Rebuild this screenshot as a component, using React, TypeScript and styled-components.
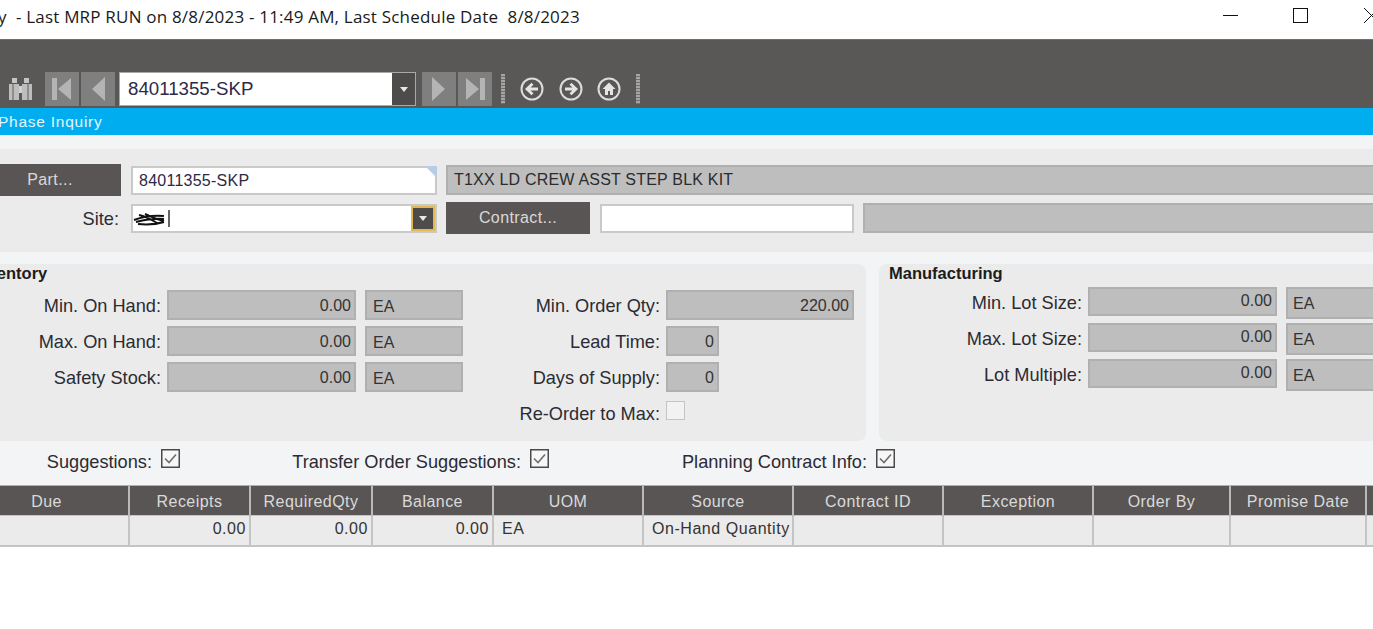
import { createGlobalStyle, styled } from "styled-components";

const FONT = `"Liberation Sans", Arial, sans-serif`;
const COLS = "165px 121px 122px 121px 150px 150px 150px 150px 137px 136px 7px";

const HEADERS = ["Due", "Receipts", "RequiredQty", "Balance", "UOM", "Source", "Contract ID", "Exception", "Order By", "Promise Date", ""];
const CELLS = ["", "0.00", "0.00", "0.00", "EA", "On-Hand Quantity", "", "", "", "", ""];

const GlobalStyle = createGlobalStyle`
  html, body {
    margin: 0;
    background: #fff;
    overflow: hidden;
  }
  body {
    font-family: ${FONT};
    font-size: 16px;
    color: #2b2b33;
  }
  * { box-sizing: border-box; }
`;

const App = () => {
  return (
    <Page>
      <GlobalStyle />
      <TitleBar>
        <TitleText>y&nbsp; - Last MRP RUN on 8/8/2023 - 11:49 AM, Last Schedule Date&nbsp; 8/8/2023</TitleText>
        <WindowButtons>
          <WinIcon viewBox="0 0 15 15">
            <path d="M0 7.5h15" stroke="#111" fill="none" />
          </WinIcon>
          <WinIcon viewBox="0 0 15 15">
            <rect x="0.5" y="0.5" width="14" height="14" stroke="#111" fill="none" />
          </WinIcon>
          <WinIcon viewBox="0 0 15 15">
            <path d="M1 0l14 14M1 15L15 1" stroke="#111" fill="none" />
          </WinIcon>
        </WindowButtons>
      </TitleBar>

      <Toolbar>
        <Binoculars viewBox="0 0 25 22">
          <path d="M4 0h5v5H4zM16 0h5v5h-5z" fill="#c4c4c4" />
          <path d="M1 6h10v16H1zM14 6h10v16H14z" fill="#bdbdbd" />
          <path d="M11 8h3v7h-3z" fill="#d0d0d0" />
          <path d="M4 6h2v16H4zM19 6h2v16h-2z" fill="#8e8e8e" />
        </Binoculars>
        <NavButton><NavIcon kind="first" /></NavButton>
        <NavButton><NavIcon kind="prev" /></NavButton>
        <ToolbarCombo>
          <ToolbarValue>84011355-SKP</ToolbarValue>
          <ComboArrow $w={23}><Caret /></ComboArrow>
        </ToolbarCombo>
        <NavButton><NavIcon kind="next" /></NavButton>
        <NavButton><NavIcon kind="last" /></NavButton>
        <Grip />
        <RoundIcon kind="back" />
        <RoundIcon kind="forward" />
        <RoundIcon kind="home" />
        <Grip />
      </Toolbar>

      <TabBar>Phase Inquiry</TabBar>

      <FormArea>
        <HeaderBlock>
          <PartRow>
            <PartButton>Part...</PartButton>
            <WhiteInput $w={306}>
              84011355-SKP
              <Corner />
            </WhiteInput>
            <GrayInput>T1XX LD CREW ASST STEP BLK KIT</GrayInput>
          </PartRow>
          <SiteRow>
            <Label $w={119}>Site:</Label>
            <SiteCombo>
              <Scribble viewBox="0 0 40 20">
                <path d="M1 12c8-3 18-5 30-4M3 14c8-2 18-4 28-3M6 7c6 1 10 3 18 8M12 6c5 2 12 6 19 7M5 16c9 1 16 1 26-2" stroke="#111" strokeWidth="2" fill="none" />
                <path d="M36 2v17" stroke="#111" strokeWidth="1.3" />
              </Scribble>
              <ComboArrow $w={24} $focused><Caret /></ComboArrow>
            </SiteCombo>
            <DarkButton $w={144}>Contract...</DarkButton>
            <WhiteInput $w={254}></WhiteInput>
            <GrayInput />
          </SiteRow>
        </HeaderBlock>

        <Panels>
          <InventoryPanel>
            <PanelTitle $indent={-27}>Inventory</PanelTitle>
            <Columns>
              <Column>
                <FieldRow>
                  <Label $w={161}>Min. On Hand:</Label>
                  <Field $w={189}>0.00</Field>
                  <Unit $w={98}>EA</Unit>
                </FieldRow>
                <FieldRow>
                  <Label $w={161}>Max. On Hand:</Label>
                  <Field $w={189}>0.00</Field>
                  <Unit $w={98}>EA</Unit>
                </FieldRow>
                <FieldRow>
                  <Label $w={161}>Safety Stock:</Label>
                  <Field $w={189}>0.00</Field>
                  <Unit $w={98}>EA</Unit>
                </FieldRow>
              </Column>
              <Column>
                <FieldRow>
                  <Label $w={197}>Min. Order Qty:</Label>
                  <Field $w={188}>220.00</Field>
                </FieldRow>
                <FieldRow>
                  <Label $w={197}>Lead Time:</Label>
                  <Field $w={53}>0</Field>
                </FieldRow>
                <FieldRow>
                  <Label $w={197}>Days of Supply:</Label>
                  <Field $w={53}>0</Field>
                </FieldRow>
                <FieldRow>
                  <Label $w={197}>Re-Order to Max:</Label>
                  <DisabledBox />
                </FieldRow>
              </Column>
            </Columns>
          </InventoryPanel>

          <ManufacturingPanel>
            <PanelTitle $indent={10}>Manufacturing</PanelTitle>
            <LotColumn>
              <FieldRow $top>
                <Label $w={203}>Min. Lot Size:</Label>
                <LotField $w={189}>0.00</LotField>
                <LotUnit>EA</LotUnit>
              </FieldRow>
              <FieldRow $top>
                <Label $w={203}>Max. Lot Size:</Label>
                <LotField $w={189}>0.00</LotField>
                <LotUnit>EA</LotUnit>
              </FieldRow>
              <FieldRow $top>
                <Label $w={203}>Lot Multiple:</Label>
                <LotField $w={189}>0.00</LotField>
                <LotUnit>EA</LotUnit>
              </FieldRow>
            </LotColumn>
          </ManufacturingPanel>
        </Panels>

        <ChecksRow>
          <CheckLabel $w={152}>Suggestions:</CheckLabel>
          <CheckBox />
          <CheckLabel $w={341}>Transfer Order Suggestions:</CheckLabel>
          <CheckBox />
          <CheckLabel $w={318}>Planning Contract Info:</CheckLabel>
          <CheckBox />
        </ChecksRow>

        <GridHeader>
          {HEADERS.map((h, i) => (
            <HeadCell key={i}>{h}</HeadCell>
          ))}
        </GridHeader>
        <GridRow>
          {CELLS.map((c, i) => (
            <BodyCell key={i} $right={i >= 1 && i <= 3}>
              {c}
            </BodyCell>
          ))}
        </GridRow>
      </FormArea>
    </Page>
  );
};

const NavIcon = ({ kind }: { kind: "first" | "prev" | "next" | "last" }) => (
  <svg width="34" height="34" viewBox="0 0 34 34">
    {kind === "first" && <path d="M7 6h5v22H7zM26 6v22L13 17z" fill="#b4b4b4" />}
    {kind === "prev" && <path d="M24 5v24L11 17z" fill="#b4b4b4" />}
    {kind === "next" && <path d="M10 5v24l13-12z" fill="#b4b4b4" />}
    {kind === "last" && <path d="M8 6v22l13-11zM22 6h5v22h-5z" fill="#b4b4b4" />}
  </svg>
);

const Caret = () => (
  <svg width="8" height="5" viewBox="0 0 8 5">
    <path d="M0 0h8L4 5z" fill="#e8e8e8" />
  </svg>
);

const RoundIcon = ({ kind }: { kind: "back" | "forward" | "home" }) => (
  <RoundWrap width="24" height="24" viewBox="0 0 24 24">
    <circle cx="12" cy="12" r="10.5" stroke="#dcdcdc" strokeWidth="2" fill="none" />
    {kind === "back" && <path d="M18 12H8M12.5 6.8 7 12l5.5 5.2" stroke="#e4e4e4" strokeWidth="2.8" fill="none" />}
    {kind === "forward" && <path d="M6 12h10M11.5 6.8 17 12l-5.5 5.2" stroke="#e4e4e4" strokeWidth="2.8" fill="none" />}
    {kind === "home" && <path d="M12 5.5 5.5 12H8v6h3v-4h2v4h3v-6h2.5z" fill="#e4e4e4" />}
  </RoundWrap>
);

const Page = styled.div`
  width: 1373px;
  height: 629px;
  overflow: hidden;
  background: #fff;
`;

const TitleBar = styled.div`
  height: 39px;
  display: flex;
  align-items: center;
  justify-content: space-between;
  background: #fff;
`;

const TitleText = styled.div`
  font-family: "Open Sans", sans-serif;
  font-size: 17px;
  letter-spacing: 0.2px;
  color: #1a1a1a;
  margin-left: -2px;
  margin-top: -6px;
  white-space: nowrap;
`;

const WindowButtons = styled.div`
  display: flex;
  align-items: center;
  gap: 55px;
  margin-top: -9px;
  margin-right: -5px;
`;

const WinIcon = styled.svg`
  width: 15px;
  height: 15px;
  display: block;
  flex: none;
`;

const Toolbar = styled.div`
  height: 69px;
  background: #595857;
  border-top: 1px solid #6e6e6e;
  display: flex;
  align-items: flex-end;
  padding: 0 0 2px 8px;
`;

const Binoculars = styled.svg`
  width: 25px;
  height: 22px;
  margin: 0 12px 6px 0;
  flex: none;
`;

const NavButton = styled.div`
  width: 34px;
  height: 34px;
  background: #7f7f7f;
  margin-right: 2px;
  flex: none;
`;

const ToolbarCombo = styled.div`
  width: 297px;
  height: 34px;
  margin: 0 6px 0 2px;
  border: 1px solid #a8a8a8;
  background: #fff;
  display: flex;
  align-items: stretch;
  flex: none;
`;

const ToolbarValue = styled.div`
  flex: 1;
  padding-left: 8px;
  font-size: 18.7px;
  line-height: 32px;
  color: #2e2a45;
`;

const ComboArrow = styled.div<{ $w: number; $focused?: boolean }>`
  width: ${(p) => p.$w}px;
  background: #4d4c4b;
  display: flex;
  align-items: center;
  justify-content: center;
  flex: none;
  border: ${(p) => (p.$focused ? "2px solid #e2b84f" : "none")};
`;

const Grip = styled.div`
  width: 4px;
  height: 30px;
  margin: 0 15px 2px 7px;
  background: repeating-linear-gradient(to bottom, #a5a5a5 0 2px, #6f6f6f 2px 3px);
  flex: none;

  & ~ & {
    margin-left: 0;
  }
`;

const RoundWrap = styled.svg`
  width: 24px;
  height: 24px;
  margin: 0 14.5px 5px 0;
  flex: none;
`;

const TabBar = styled.div`
  height: 27px;
  background: #00adef;
  color: #e4f4fb;
  font-size: 15.5px;
  line-height: 27px;
  text-indent: -2px;
  letter-spacing: 0.75px;
`;

const FormArea = styled.div`
  background: #f3f4f6;
  height: 412px;
  padding-top: 14px;
`;

const HeaderBlock = styled.div`
  background: #ebebeb;
  height: 103px;
  padding-top: 15px;
`;

const PartRow = styled.div`
  display: flex;
  align-items: center;
  gap: 10px;
  height: 32px;
  margin-bottom: 6px;
  & > :last-child {
    margin-left: -1px;
  }
`;

const SiteRow = styled(PartRow)`
  margin-bottom: 0;
  & > :nth-child(1) {
    margin-right: 2px;
  }
  & > :nth-child(2) {
    margin-right: -1px;
  }
  & > :last-child {
    margin-left: -1px;
  }
`;

const DarkButton = styled.div<{ $w: number }>`
  width: ${(p) => p.$w}px;
  height: 32px;
  background: #595554;
  color: #d9d9d9;
  letter-spacing: 0.4px;
  display: flex;
  align-items: center;
  justify-content: center;
  flex: none;
`;

/* the button runs off the left edge of the shot, so its label sits left of the visible centre */
const PartButton = styled(DarkButton).attrs({ $w: 142 })`
  margin-left: -21px;
`;

const WhiteInput = styled.div<{ $w: number }>`
  position: relative;
  width: ${(p) => p.$w}px;
  height: 29px;
  background: #fff;
  border: 2px solid #c9c9c9;
  padding-left: 6px;
  line-height: 25px;
  letter-spacing: 0.25px;
  color: #2e2a45;
  flex: none;
`;

const Corner = styled.span`
  position: absolute;
  top: -2px;
  right: -2px;
  border-top: 12px solid #b6cde4;
  border-left: 12px solid transparent;
`;

const GrayInput = styled.div`
  flex: 1;
  height: 30px;
  background: #bebebe;
  border: 2px solid #b0b0b0;
  border-right: none;
  padding-left: 6px;
  line-height: 26px;
  letter-spacing: 0.2px;
  color: #2b2b2b;
  white-space: nowrap;
`;

const SiteCombo = styled.div`
  width: 306px;
  height: 29px;
  background: #fff;
  border: 2px solid #c9c9c9;
  display: flex;
  justify-content: space-between;
  flex: none;
`;

const Scribble = styled.svg`
  width: 40px;
  height: 20px;
  margin-top: 2px;
`;

const Panels = styled.div`
  display: flex;
  margin-top: 12px;
  height: 177px;
`;

const InventoryPanel = styled.div`
  width: 866px;
  background: #ebebeb;
  border-radius: 0 8px 8px 0;
  flex: none;
`;

const ManufacturingPanel = styled.div`
  flex: 1;
  margin-left: 13px;
  background: #ebebeb;
  border-radius: 8px 0 0 8px;
`;

const PanelTitle = styled.div<{ $indent: number }>`
  font-weight: 700;
  font-size: 16.5px;
  line-height: 18px;
  color: #1c1c1c;
  margin-left: ${(p) => p.$indent}px;
`;

const Columns = styled.div`
  display: flex;
  align-items: flex-start;
  margin-top: 8px;
`;

const Column = styled.div`
  display: flex;
  flex-direction: column;
  gap: 6px;
`;

const LotColumn = styled(Column)`
  margin-top: 5px;
  gap: 4px;
`;

const FieldRow = styled.div<{ $top?: boolean }>`
  display: flex;
  align-items: ${(p) => (p.$top ? "flex-start" : "center")};
  gap: 6px;
  height: ${(p) => (p.$top ? "32px" : "30px")};
`;

const Label = styled.div<{ $w: number }>`
  width: ${(p) => p.$w}px;
  height: 30px;
  font-size: 18.2px;
  text-align: right;
  white-space: nowrap;
  flex: none;
  color: #2b2b33;
  line-height: 32px;
`;

const Field = styled.div<{ $w: number }>`
  width: ${(p) => p.$w}px;
  height: 30px;
  background: #bebebe;
  border: 2px solid #b0b0b0;
  text-align: right;
  padding-right: 3px;
  line-height: 27px;
  color: #333;
  flex: none;
`;

const Unit = styled.div<{ $w: number }>`
  width: ${(p) => p.$w}px;
  height: 30px;
  margin-left: 3px;
  background: #bebebe;
  border: 2px solid #b0b0b0;
  padding-left: 6px;
  line-height: 30px;
  color: #333;
  flex: none;
`;

const LotField = styled(Field)`
  height: 29px;
  line-height: 24px;
`;

const LotUnit = styled.div`
  width: 100px;
  height: 32px;
  margin-left: 3px;
  background: #bebebe;
  border: 2px solid #b0b0b0;
  padding-left: 5px;
  line-height: 29px;
  color: #333;
  flex: none;
`;

const DisabledBox = styled.div`
  width: 19px;
  height: 19px;
  margin-top: -5px;
  background: #f2f2f2;
  border: 1px solid #c4c4c4;
  flex: none;
`;

const ChecksRow = styled.div`
  height: 44px;
  display: flex;
  align-items: center;
`;

const CheckLabel = styled.div<{ $w: number }>`
  width: ${(p) => p.$w}px;
  font-size: 18.2px;
  text-align: right;
  white-space: nowrap;
  flex: none;
  margin-top: -2px;
`;

const CheckBox = () => (
  <CheckSvg viewBox="0 0 19 19">
    <rect x="0.75" y="0.75" width="17.5" height="17.5" fill="#f7f7f7" stroke="#4a4a4a" strokeWidth="1.5" />
    <path d="M4 9.5l4 4 7-8" stroke="#6e6e6e" strokeWidth="1.6" fill="none" />
  </CheckSvg>
);

const CheckSvg = styled.svg`
  width: 19px;
  height: 19px;
  margin: -9px 0 0 9px;
  flex: none;
`;

const GridHeader = styled.div`
  display: grid;
  grid-template-columns: ${COLS};
  margin-left: -35px;
  height: 31px;
  background: #595554;
  border-top: 1px solid #b0b0b0;
  border-bottom: 1px solid #c4c4c4;
`;

const HeadCell = styled.div`
  color: #dadada;
  text-align: center;
  line-height: 31px;
  letter-spacing: 0.45px;
  border-right: 2px solid #b9b9b9;
  white-space: nowrap;
  &:last-child {
    border-right: none;
  }
`;

const GridRow = styled.div`
  display: grid;
  grid-template-columns: ${COLS};
  margin-left: -35px;
  height: 31px;
  background: #ebebeb;
  border-bottom: 2px solid #c4c4c4;
`;

const BodyCell = styled.div<{ $right?: boolean }>`
  text-align: ${(p) => (p.$right ? "right" : "left")};
  padding: 0 ${(p) => (p.$right ? "3px" : "0")} 0 ${(p) => (p.$right ? "0" : "8px")};
  line-height: 26px;
  letter-spacing: 0.55px;
  border-right: 2px solid #c4c4c4;
  white-space: nowrap;
  overflow: hidden;
  color: #333;
  &:last-child {
    border-right: none;
  }
`;

export default App;
